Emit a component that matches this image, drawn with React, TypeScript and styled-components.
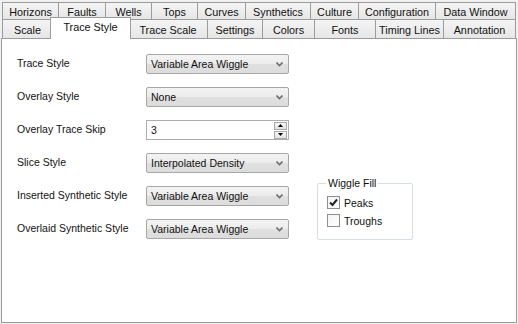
import React from 'react'
import styled, { createGlobalStyle } from 'styled-components';

const GlobalStyle = createGlobalStyle`
  html, body {
    margin: 0;
    padding: 0;
    background: #f0f0f0;
  }
  body {
    font-family: "Liberation Sans", Arial, sans-serif;
    font-size: 10.5px;
    color: #111;
  }
`

const Root = styled.div`
  width: 518px;
  height: 324px;
  padding: 2px 0 0 1px;
  box-sizing: border-box;
  user-select: none;
`

const TabStrip = styled.div`
  display: flex;
  flex-direction: column;
  padding-left: 1px;
`

const TabRow = styled.div`
  display: flex;
  align-items: flex-end;
`

const Tab = styled.div<{ $w: number; $tall?: boolean; $active?: boolean }>`
  flex: none;
  box-sizing: border-box;
  width: ${(p) => p.$w}px;
  height: ${(p) => (p.$tall ? 19 : 17)}px;
  margin-right: -1px;
  border: 1px solid #9c9c9c;
  border-bottom: none;
  background: linear-gradient(#f4f4f4, #e6e6e6);
  display: flex;
  align-items: center;
  justify-content: center;
  padding-top: 1px;
  white-space: nowrap;
  font-size: 10.8px;
  position: relative;

  ${(p) =>
    p.$active &&
    `
    height: 22px;
    margin-top: -2px;
    margin-bottom: -1px;
    margin-left: -2px;
    margin-right: -3px;
    background: #fff;
    z-index: 2;
    padding-top: 0;
    padding-bottom: 3px;
  `}
`

const Panel = styled.div`
  box-sizing: border-box;
  width: 516px;
  height: 285px;
  border: 1px solid #9c9c9c;
  background: #fff;
  padding: 15px 0 0 15px;
  display: flex;
  align-items: flex-start;
`

const FormGrid = styled.div`
  display: grid;
  grid-template-columns: 129px 143px;
  grid-auto-rows: 20px;
  row-gap: 13px;
`

const Label = styled.div`
  display: flex;
  align-items: center;
  padding-bottom: 2px;
  white-space: nowrap;
`

const Combo = styled.div`
  box-sizing: border-box;
  height: 20px;
  border: 1px solid #a7a7a7;
  border-radius: 2px;
  background: linear-gradient(#f3f3f3 0%, #ececec 50%, #e0e0e0 51%, #dcdcdc 100%);
  display: flex;
  align-items: center;
  justify-content: space-between;
  padding: 0 5px 0 4px;
  white-space: nowrap;
`

const Chevron = () => (
  <svg width="7" height="5" viewBox="0 0 7 5">
    <polyline points="0.5,0.5 3.5,3.5 6.5,0.5" fill="none" stroke="#6f6f6f" strokeWidth="1.6" />
  </svg>
)

const SpinBox = styled.div`
  box-sizing: border-box;
  height: 20px;
  border: 1px solid #abadb3;
  background: #fff;
  display: flex;
  align-items: center;
  justify-content: space-between;
  padding: 0 1px 0 4px;
`

const SpinButtons = styled.div`
  display: flex;
  flex-direction: column;
  gap: 1px;
`

const SpinButton = styled.div`
  box-sizing: border-box;
  width: 13px;
  height: 8px;
  border: 1px solid #a9a9a9;
  background: linear-gradient(#f6f6f6, #e2e2e2);
  display: flex;
  align-items: center;
  justify-content: center;
`

const Tri = ({ up }: { up?: boolean }) => (
  <svg width="5" height="3" viewBox="0 0 5 3">
    <polygon points={up ? '0,3 5,3 2.5,0' : '0,0 5,0 2.5,3'} fill="#000" />
  </svg>
)

const GroupBox = styled.div`
  box-sizing: border-box;
  position: relative;
  width: 96px;
  height: 57px;
  margin: 129px 0 0 28px;
  border: 1px solid #d5dfe5;
  border-radius: 2px;
  padding: 12px 0 0 9px;
  display: flex;
  flex-direction: column;
  gap: 5px;
`

const Legend = styled.span`
  position: absolute;
  top: -7px;
  left: 8px;
  background: #fff;
  padding: 0 2px;
  line-height: 13px;
`

const CheckRow = styled.label`
  display: flex;
  align-items: center;
  gap: 4px;
  height: 13px;
`

const Box = styled.span`
  box-sizing: border-box;
  width: 13px;
  height: 13px;
  border: 1px solid #8e8f8f;
  background: linear-gradient(135deg, #f4f4f4, #ffffff);
  display: flex;
  align-items: center;
  justify-content: center;
`

const Check = () => (
  <svg width="9" height="9" viewBox="0 0 9 9">
    <polyline points="1,4.5 3.5,7 8,1.5" fill="none" stroke="#222" strokeWidth="2" />
  </svg>
)

const row1 = [
  ['Horizons', 57], ['Faults', 48], ['Wells', 47], ['Tops', 47], ['Curves', 49],
  ['Synthetics', 66], ['Culture', 49], ['Configuration', 78], ['Data Window', 81],
] as const

const row2 = [
  ['Scale', 51], ['Trace Style', 81], ['Trace Scale', 80], ['Settings', 56],
  ['Colors', 53], ['Fonts', 62], ['Timing Lines', 69], ['Annotation', 73],
] as const

const combos = [
  ['Trace Style', 'Variable Area Wiggle'],
  ['Overlay Style', 'None'],
  ['Overlay Trace Skip', null],
  ['Slice Style', 'Interpolated Density'],
  ['Inserted Synthetic Style', 'Variable Area Wiggle'],
  ['Overlaid Synthetic Style', 'Variable Area Wiggle'],
] as const

function App() {
  return (
    <Root>
      <GlobalStyle />
      <TabStrip>
        <TabRow>
          {row1.map(([t, w]) => (
            <Tab key={t} $w={w}>{t}</Tab>
          ))}
        </TabRow>
        <TabRow>
          {row2.map(([t, w]) => (
            <Tab key={t} $w={w} $tall $active={t === 'Trace Style'}>{t}</Tab>
          ))}
        </TabRow>
      </TabStrip>
      <Panel>
        <FormGrid>
          {combos.map(([label, value]) => (
            <React.Fragment key={label}>
              <Label>{label}</Label>
              {value === null ? (
                <SpinBox>
                  <span>3</span>
                  <SpinButtons>
                    <SpinButton><Tri up /></SpinButton>
                    <SpinButton><Tri /></SpinButton>
                  </SpinButtons>
                </SpinBox>
              ) : (
                <Combo>
                  <span>{value}</span>
                  <Chevron />
                </Combo>
              )}
            </React.Fragment>
          ))}
        </FormGrid>
        <GroupBox>
          <Legend>Wiggle Fill</Legend>
          <CheckRow>
            <Box><Check /></Box>
            Peaks
          </CheckRow>
          <CheckRow>
            <Box />
            Troughs
          </CheckRow>
        </GroupBox>
      </Panel>
    </Root>
  )
}

export default App
